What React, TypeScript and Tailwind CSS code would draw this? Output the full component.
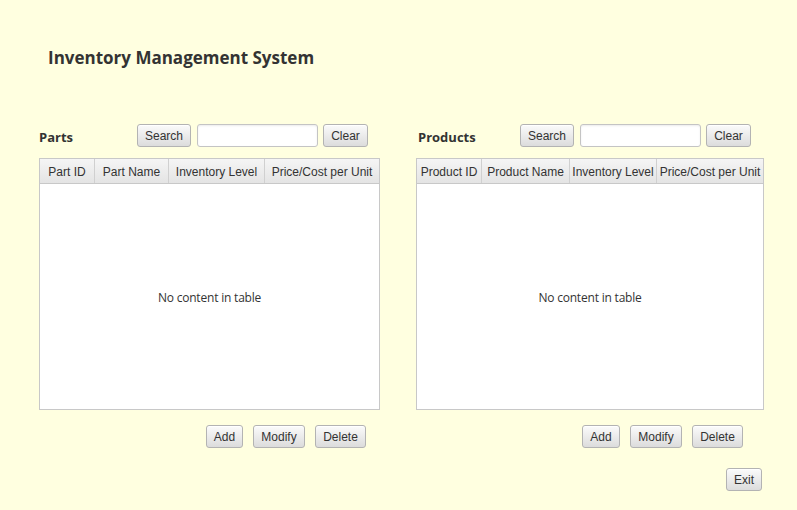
const btn =
  'h-[23px] rounded-[3px] border border-[#b3b3b3] bg-gradient-to-b from-[#fbfbfb] to-[#dcdcdc] text-[12px] text-[#333] leading-none shadow-[inset_0_1px_0_#ffffff] font-["Liberation_Sans",Arial,sans-serif]';

interface Col {
  label: string;
  width: string;
}

const Panel = ({ title, labelW, cols }: { title: string; labelW: string; cols: Col[] }) => (
  <div className="flex flex-col">
    <div className="flex items-center h-[23px]">
      <span className={`${labelW} pt-[4px] text-[13px] font-bold text-[#333] font-["Open_Sans","Noto_Sans",sans-serif]`}>{title}</span>
      <button className={`${btn} w-[54px]`}>Search</button>
      <input className="ml-[6px] w-[121px] h-[23px] rounded-[3px] border border-[#c4c4c4] bg-white shadow-[inset_0_1px_2px_rgba(0,0,0,0.08)] outline-none" />
      <button className={`${btn} ml-[5px] w-[45px]`}>Clear</button>
    </div>
    <div className="mt-[11px] h-[252px] border border-[#c8c8c8] bg-white flex flex-col">
      <div className="flex h-[25px] border-b border-[#c8c8c8] bg-gradient-to-b from-[#f5f5f5] to-[#e4e4e4]">
        {cols.map((c, i) => (
          <div
            key={c.label}
            className={`${c.width} flex items-center justify-center pt-[1px] text-[12px] text-[#333] whitespace-nowrap font-["Liberation_Sans",Arial,sans-serif] ${i < cols.length - 1 ? 'border-r border-[#d0d0d0]' : ''}`}
          >
            {c.label}
          </div>
        ))}
      </div>
      <div className="flex-1 flex items-center justify-center pt-[2px]">
        <span className='text-[12px] text-[#333] font-["Open_Sans","Noto_Sans",sans-serif] tracking-[-0.2px]'>No content in table</span>
      </div>
    </div>
  </div>
);

export default function App() {
  return (
    <div className="w-[797px] h-[510px] bg-[#ffffe0] overflow-hidden">
      <h1 className='pl-[48px] pt-[46px] text-[17px] leading-[24px] font-bold text-[#333] font-["Open_Sans","Noto_Sans",sans-serif]'>
        Inventory Management System
      </h1>
      <div className="flex mt-[54px] pl-[39px] gap-[36px]">
        <div className="w-[341px] flex flex-col">
          <Panel
            title="Parts"
            labelW="w-[98px]"
            cols={[
              { label: 'Part ID', width: 'w-[55px]' },
              { label: 'Part Name', width: 'w-[74px]' },
              { label: 'Inventory Level', width: 'w-[96px]' },
              { label: 'Price/Cost per Unit', width: 'w-[114px]' },
            ]}
          />
          <div className="flex gap-[10px] pl-[167px] mt-[15px]">
            <button className={`${btn} w-[37px]`}>Add</button>
            <button className={`${btn} w-[52px]`}>Modify</button>
            <button className={`${btn} w-[51px]`}>Delete</button>
          </div>
        </div>
        <div className="w-[348px] flex flex-col">
          <Panel
            title="Products"
            labelW="w-[104px] pl-[2px]"
            cols={[
              { label: 'Product ID', width: 'w-[65px]' },
              { label: 'Product Name', width: 'w-[88px]' },
              { label: 'Inventory Level', width: 'w-[87px]' },
              { label: 'Price/Cost per Unit', width: 'w-[106px]' },
            ]}
          />
          <div className="flex gap-[10px] pl-[166px] mt-[15px]">
            <button className={`${btn} w-[38px]`}>Add</button>
            <button className={`${btn} w-[52px]`}>Modify</button>
            <button className={`${btn} w-[51px]`}>Delete</button>
          </div>
        </div>
      </div>
      <div className="flex justify-end pr-[35px] mt-[20px]">
        <button className={`${btn} w-[36px]`}>Exit</button>
      </div>
    </div>
  );
}
